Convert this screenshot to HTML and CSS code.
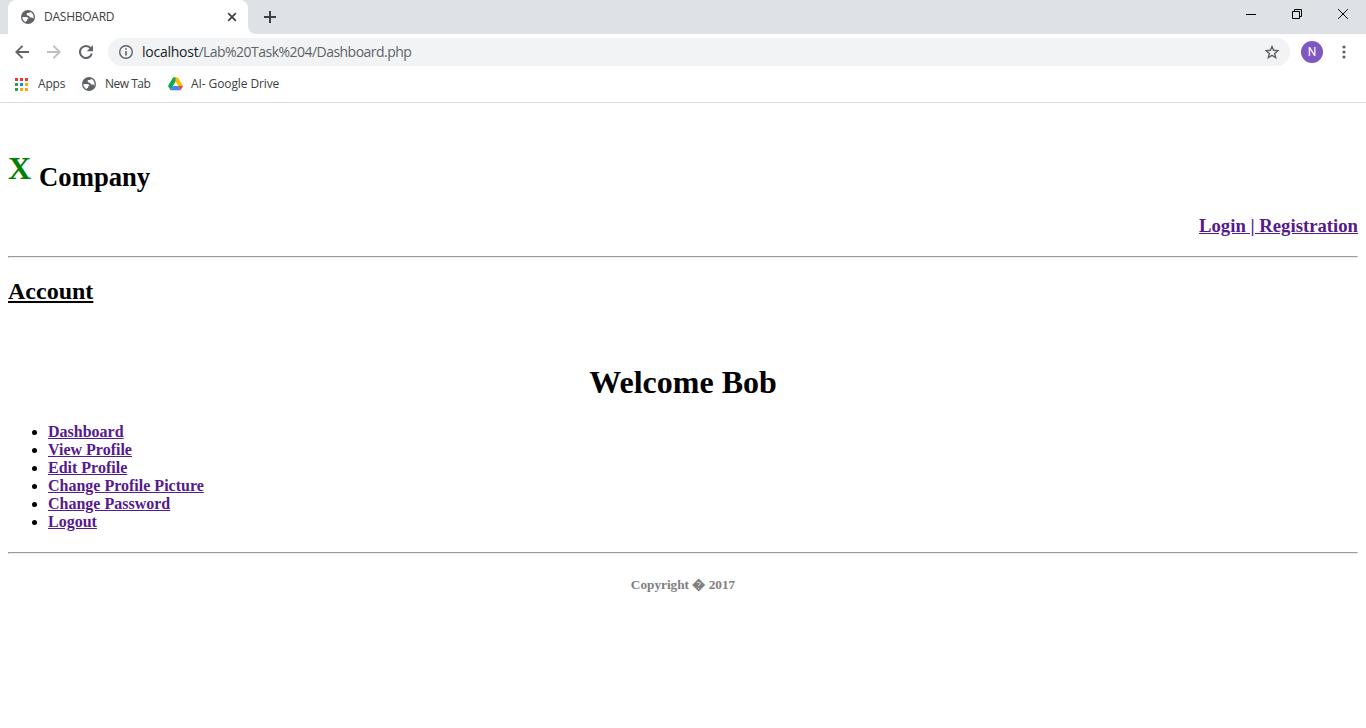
FILE: index.html
```html
<!DOCTYPE html>
<html lang="en">
<head>
<meta charset="utf-8">
<title>DASHBOARD</title>
<link rel="stylesheet" href="styles.css">
</head>
<body>
<svg width="0" height="0" class="defs"><symbol id="globe" viewBox="0 0 14 14"><circle cx="7" cy="7" r="7" fill="#5f6368"/><path d="M1.400 7h3.400c1.700 0 2.700.9 2.700 2.100H6.200v1.200c0 .6-.6.9-1.300.9v1C2.900 11.400 1.400 9.400 1.400 7zM9.400 1.900C11.400 2.800 12.600 4.700 12.600 7c0 .7-.1 1.200-.3 1.700-.5-.8-1.100-1.100-2-1.100-1.300 0-1.900-.6-1.900-1.700-1.500 0-2.800-.5-2.800-1.700 0-.8.600-1.300 1.500-1.300.9 0 1.400-.4 2.300-1z" fill="#fff"/></symbol></svg>
<header class="browser">
  <div class="tabs">
    <div class="tab">
      <svg class="globe" width="14" height="14"><use href="#globe"/></svg>
      <span class="tab-title">DASHBOARD</span>
      <svg class="tab-close" width="10" height="10" viewBox="0 0 10 10"><path d="M1.200 1.200l7.600 7.600M8.800 1.200L1.200 8.800" stroke="#3c4043" stroke-width="1.700"/></svg>
    </div>
    <svg class="curve" width="8" height="8" viewBox="0 0 8 8"><path d="M0 0v8h8a8 8 0 0 1-8-8z" fill="#fff"/></svg>
    <svg class="new-tab" width="12" height="12" viewBox="0 0 12 12"><path d="M6 0v12M0 6h12" stroke="#3c4043" stroke-width="2"/></svg>
    <div class="window-buttons">
      <svg width="11" height="11" viewBox="0 0 11 11"><path d="M0 5.500h10" stroke="#000"/></svg>
      <svg width="11" height="11" viewBox="0 0 11 11"><path d="M.5 2.500h7v7h-7zM2.500 2.500v-2h7v7h-2" fill="none" stroke="#000"/></svg>
      <svg width="11" height="11" viewBox="0 0 11 11"><path d="M.1.1l9.800 9.800M9.900.1L.1 9.900" stroke="#000"/></svg>
    </div>
  </div>
  <div class="toolbar">
    <svg width="14" height="14" viewBox="0 0 14 14"><path d="M14 7H1.500M7.500.8L1.300 7l6.200 6.200" fill="none" stroke="#5f6368" stroke-width="1.900"/></svg>
    <svg class="forward" width="14" height="14" viewBox="0 0 14 14"><path d="M0 7h12.500M6.500.8L12.700 7l-6.200 6.200" fill="none" stroke="#bdbfc1" stroke-width="1.900"/></svg>
    <svg class="reload" width="14" height="14" viewBox="0 0 14 14"><path d="M11.700 3.300A6 6 0 1 0 12.800 8.600" fill="none" stroke="#5f6368" stroke-width="2"/><path d="M14 0v6.200H7.800z" fill="#5f6368"/></svg>
    <div class="address">
      <svg width="14" height="14" viewBox="0 0 14 14"><circle cx="7" cy="7" r="6.300" fill="none" stroke="#5f6368" stroke-width="1.400"/><path d="M7 6v4.500M7 3.300v1.500" stroke="#5f6368" stroke-width="1.600"/></svg>
      <span class="url"><span class="host">localhost</span>/Lab%20Task%204/Dashboard.php</span>
      <svg class="star" width="14" height="14" viewBox="0 0 14 14"><path d="M7 1.500l1.600 3.800 4.400.3-3.400 2.800 1.100 4.200L7 10.400l-3.700 2.200 1.100-4.200L1 5.600l4.400-.3z" fill="none" stroke="#5f6368" stroke-width="1.400"/></svg>
    </div>
    <span class="avatar">N</span>
    <svg class="more" width="4" height="14" viewBox="0 0 4 14"><g fill="#5f6368"><circle cx="2" cy="2" r="1.600"/><circle cx="2" cy="7" r="1.600"/><circle cx="2" cy="12" r="1.600"/></g></svg>
  </div>
  <div class="bookmarks">
    <svg class="apps" width="13" height="13" viewBox="0 0 13 13" shape-rendering="crispEdges"><path d="M0 0h3v3H0zM5 0h3v3H5zM10 0h3v3h-3z" fill="#f0372d"/><path d="M0 5h3v3H0zM0 10h3v3H0z" fill="#22a05a"/><path d="M5 5h3v3H5z" fill="#1a84ff"/><path d="M10 5h3v3h-3zM5 10h3v3H5zM10 10h3v3h-3z" fill="#fbab00"/></svg>
    <span class="apps-label">Apps</span>
    <svg class="globe" width="14" height="14"><use href="#globe"/></svg>
    <span class="newtab-label">New Tab</span>
    <svg class="drive" width="15" height="14" viewBox="0 0 15 14"><path d="M5 .5h2.500v4.300L4.600 9.500 2.500 13.200 0 9z" fill="#11a652"/><path d="M5 .5h5L15 9h-4.700L7.500 4.600z" fill="#ffba00"/><path d="M5 .5h2.500v4z" fill="#11a652"/><path d="M4.600 9h5.800l2.200 4.300H2.400z" fill="#4285f4"/><path d="M10.300 9H15l-2.400 4.300z" fill="#ea4335"/></svg>
    <span class="drive-label">AI- Google Drive</span>
  </div>
</header>
<main class="page">
  <h1 class="brand"><span class="brand-x">X</span> <sub>Company</sub></h1>
  <h3 class="auth"><a href="#">Login | Registration</a></h3>
  <hr>
  <h2 class="account">Account</h2>
  <h1 class="welcome">Welcome Bob</h1>
  <ul class="menu">
    <li><a href="#">Dashboard</a></li>
    <li><a href="#">View Profile</a></li>
    <li><a href="#">Edit Profile</a></li>
    <li><a href="#">Change Profile Picture</a></li>
    <li><a href="#">Change Password</a></li>
    <li><a href="#">Logout</a></li>
  </ul>
  <hr>
  <h5 class="copyright">Copyright &#xFFFD; 2017</h5>
</main>
</body>
</html>
```

FILE: styles.css
```css
* { box-sizing: border-box; }
body { margin: 0; background: #fff; color: #000; font-family: "Liberation Serif", serif; overflow: hidden; }
svg { display: block; flex: none; }
.defs { position: absolute; }
.browser { height: 103px; border-bottom: 1px solid #dadce0; font-family: "Open Sans", sans-serif; font-size: 12px; color: #3c4043; white-space: nowrap; }
.tabs { display: flex; height: 34px; background: #dee1e6; padding-left: 8px; }
.tab { display: flex; align-items: center; width: 240px; padding: 0 11px 0 13px; background: #fff; border-radius: 8px 8px 0 0; }
.tab-title { margin-left: 9px; padding-bottom: 1px; letter-spacing: -.25px; }
.tab-close { margin-left: auto; }
.curve { align-self: flex-end; }
.new-tab { margin: 11px 0 0 8px; }
.window-buttons { display: flex; gap: 35px; margin: 9px 17px 0 auto; }
.toolbar { display: flex; align-items: center; height: 36px; padding: 0 20px 0 15px; }
.forward { margin-left: 18px; }
.reload { margin-left: 18px; }
.address { display: flex; align-items: center; width: 1182px; height: 28px; margin-left: 15px; padding: 0 11px; border-radius: 14px; background: #f1f3f4; }
.url { margin-left: 9px; padding-bottom: 1px; font-size: 14px; color: #5f6368; letter-spacing: -.53px; }
.host { color: #202124; letter-spacing: -.25px; }
.star { margin-left: auto; }
.avatar { width: 22px; height: 22px; margin-left: 11px; border-radius: 50%; background: #7e57c2; color: #fff; font: 12px/22px Roboto, sans-serif; text-align: center; }
.more { margin-left: auto; }
.bookmarks { display: flex; align-items: center; height: 28px; padding-left: 15px; }
.bookmarks span { padding-bottom: 1px; }
.apps-label { margin-left: 10px; width: 44px; letter-spacing: -.2px; }
.newtab-label { margin-left: 9px; width: 63px; letter-spacing: -.5px; }
.drive-label { margin-left: 8px; letter-spacing: -.1px; }
.page { padding: 47px 8px 0; }
hr { margin: 0; }
.brand { height: 46px; margin: 0; font-size: 32px; line-height: 37px; }
.brand-x { color: green; }
.brand sub { font-size: 26.67px; line-height: 30px; }
.auth { margin: 20px 0; font-size: 18.72px; line-height: 20px; text-align: right; }
a { color: #551a8b; text-decoration: underline; }
.account { margin: 20px 0 0; font-size: 24px; line-height: 27px; text-decoration: underline; }
.welcome { margin: 59px 0 22px; font-size: 32px; line-height: 37px; text-align: center; }
.menu { margin: 0 0 21px; padding-left: 40px; font-size: 16px; line-height: 18px; }
.menu a { font-weight: bold; }
.copyright { margin: 23px 0 0; color: gray; font-size: 13.28px; line-height: 15px; text-align: center; }
```
